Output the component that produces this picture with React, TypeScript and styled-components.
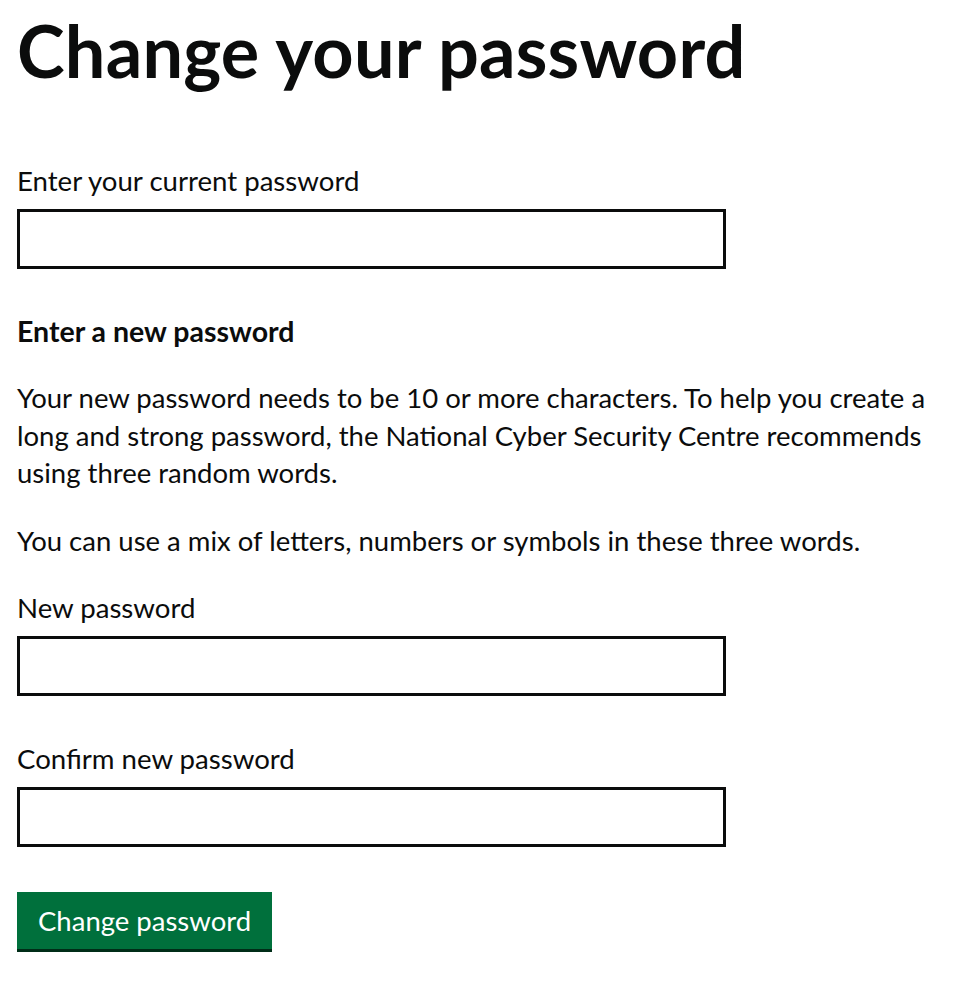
import styled, { createGlobalStyle } from 'styled-components';

const GlobalStyle = createGlobalStyle`
  body {
    margin: 0;
    background: #fff;
    color: #0b0c0c;
    font-family: Lato, "Liberation Sans", sans-serif;
  }
  * {
    box-sizing: border-box;
  }
`;

const App = () => {
  return (
    <Page>
      <GlobalStyle />
      <Heading>Change your password</Heading>
      <form onSubmit={e => e.preventDefault()}>
        <FormGroup>
          <Label htmlFor="current-password">Enter your current password</Label>
          <Input id="current-password" type="password" />
        </FormGroup>
        <Fieldset>
          <Legend>Enter a new password</Legend>
          <Body>
            Your new password needs to be 10 or more characters. To help you
            create a long and strong password, the National Cyber Security
            Centre recommends using three random words.
          </Body>
          <Body>
            You can use a mix of letters, numbers or symbols in these three
            words.
          </Body>
          <FormGroup>
            <Label htmlFor="new-password">New password</Label>
            <Input id="new-password" type="password" />
          </FormGroup>
          <FormGroup>
            <Label htmlFor="confirm-password">Confirm new password</Label>
            <Input id="confirm-password" type="password" />
          </FormGroup>
        </Fieldset>
        <Button type="submit">Change password</Button>
      </form>
    </Page>
  );
};

export default App;

const Page = styled.main`
  padding: 13px 17px 30px;
  width: 958px;
`;
const Heading = styled.h1`
  margin: 0 0 74px;
  font-size: 72px;
  line-height: 75px;
  font-weight: 700;
  letter-spacing: 0.2px;
`;
const FormGroup = styled.div`
  margin-bottom: 44px;
`;
const Label = styled.label`
  display: block;
  font-size: 27.6px;
  line-height: 37px;
  margin-bottom: 10px;
`;
const Input = styled.input`
  display: block;
  width: 709px;
  height: 60px;
  border: 3px solid #0b0c0c;
  border-radius: 0;
  padding: 7px;
  font-size: 27px;
  font-family: inherit;
`;
const Fieldset = styled.fieldset`
  margin: 0;
  padding: 0;
  border: 0;
`;
const Legend = styled.legend`
  padding: 0;
  font-size: 28.5px;
  line-height: 37px;
  font-weight: 700;
  margin-bottom: 29px;
`;
const Body = styled.p`
  margin: 0 0 30px;
  font-size: 27.5px;
  line-height: 37.5px;
`;
const Button = styled.button`
  display: inline-block;
  margin: 1px 0 0;
  padding: 9px 18px 9px;
  border: 3px solid transparent;
  border-radius: 0;
  background-color: #00703c;
  box-shadow: 0 3px 0 #002d18;
  color: #fff;
  font-family: inherit;
  font-size: 27.5px;
  line-height: 33px;
  cursor: pointer;
`;
